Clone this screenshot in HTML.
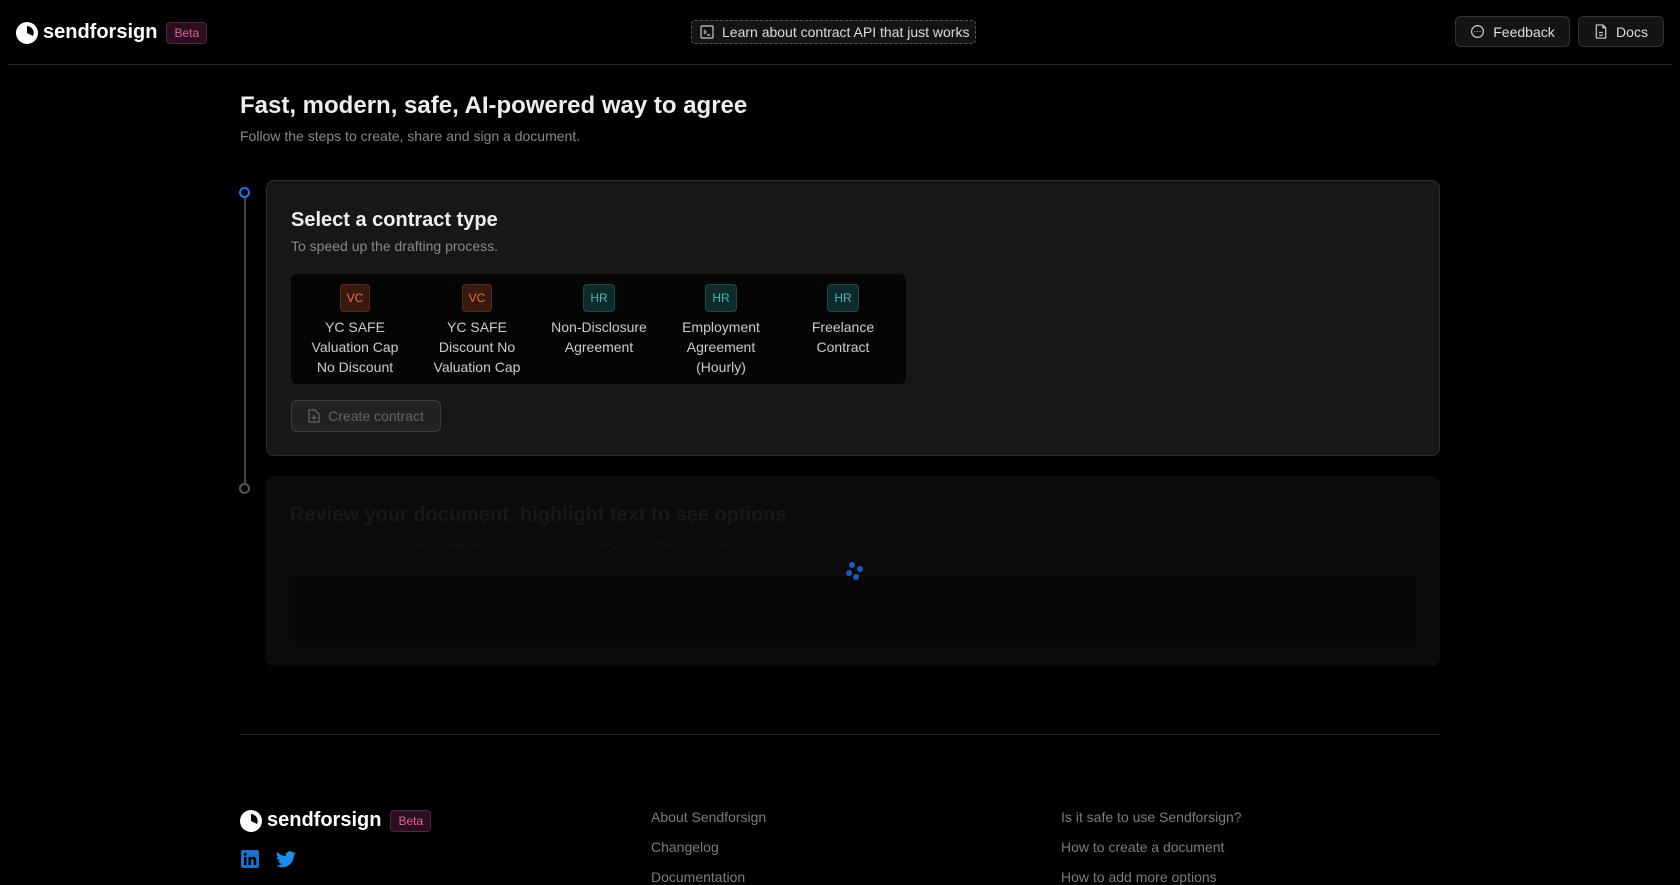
<!DOCTYPE html>
<html><head><meta charset="utf-8">
<style>
*{box-sizing:border-box;margin:0;padding:0}
body{width:1680px;height:876px;overflow:hidden;background:#000;font-family:"Liberation Sans",sans-serif;color:#e5e5e5;position:relative}
.abs{position:absolute}
.logo{display:flex;align-items:center;gap:5px;font-weight:bold;font-size:20px;color:#fff}
.beta{font-size:12px;color:#e0609a;background:#2a0f1e;border:1px solid #5a2040;border-radius:4px;padding:3px 7px;font-weight:normal;margin-left:4px}
.btn{border:1px solid #333;background:#141414;border-radius:6px;display:flex;align-items:center;justify-content:center;gap:8px;font-size:14px;color:#ddd}
.card{position:absolute;left:266px;width:1174px;border-radius:8px}
.badge{display:inline-block;font-size:12px;padding:3px 6px;border-radius:4px;margin-bottom:5px}
.vc{background:#3a1a10;border:1px solid #5a2a18;color:#e0704a}
.hr{background:#0f2a2a;border:1px solid #1e4a48;color:#4ab8b0}
.col{width:122px;text-align:center;font-size:14px;line-height:20px;color:#ccc}
.fl{position:absolute;font-size:14px;color:#7c7c7c}
</style></head><body>
<div class="abs logo" style="left:16px;top:21px">
<svg width="22" height="22" viewBox="0 0 22 22"><circle cx="11" cy="11" r="11" fill="#fff"/><path d="M11 11 L11 4 A7 7 0 0 1 17 14 Z" fill="#000"/></svg>
<span>sendforsign</span><span class="beta">Beta</span></div>
<div class="abs" style="left:691px;top:20px;width:285px;height:24px;border:1px dashed #555;border-radius:4px;background:#141414;font-size:14px;color:#ddd;display:flex;align-items:center;gap:8px;padding-left:8px">
<svg width="14" height="14" viewBox="0 0 14 14" fill="none" stroke="#ccc" stroke-width="1.2"><rect x="1" y="1" width="12" height="12" rx="1"/><path d="M4 5l2 2-2 2M7 10h3"/></svg>Learn about contract API that just works</div>
<div class="abs btn" style="left:1455px;top:16px;width:115px;height:31px"><svg width="15" height="15" viewBox="0 0 16 16" fill="none" stroke="#ccc" stroke-width="1.3"><circle cx="8" cy="8" r="6.3"/><circle cx="5.3" cy="8" r=".6" fill="#ccc" stroke="none"/><circle cx="8" cy="8" r=".6" fill="#ccc" stroke="none"/><circle cx="10.7" cy="8" r=".6" fill="#ccc" stroke="none"/></svg>Feedback</div>
<div class="abs btn" style="left:1578px;top:16px;width:86px;height:31px"><svg width="14" height="15" viewBox="0 0 14 16" fill="none" stroke="#ccc" stroke-width="1.3"><path d="M2 1h7l3 3v11H2z M9 1v3h3 M5 9h4 M5 12h4"/></svg>Docs</div>
<div class="abs" style="left:8px;top:64px;width:1664px;height:1px;background:#262626"></div>

<div class="abs" style="left:240px;top:92px;font-size:24px;font-weight:bold;color:#eee">Fast, modern, safe, AI-powered way to agree</div>
<div class="abs" style="left:240px;top:128px;font-size:14px;color:#888">Follow the steps to create, share and sign a document.</div>

<div class="abs" style="left:244px;top:192px;width:2px;height:296px;background:#444"></div>
<div class="abs" style="left:239px;top:187px;width:11px;height:11px;border-radius:50%;border:2.5px solid #2b6fe0;background:#000"></div>
<div class="abs" style="left:239px;top:483px;width:11px;height:11px;border-radius:50%;border:2.5px solid #555;background:#000"></div>

<div class="card" style="top:180px;height:276px;background:#171717;border:1px solid #2c2c2c">
<div class="abs" style="left:24px;top:28px;font-size:20px;font-weight:bold;color:#eee">Select a contract type</div>
<div class="abs" style="left:24px;top:57px;font-size:14px;color:#888">To speed up the drafting process.</div>
<div class="abs" style="left:24px;top:93px;width:615px;height:110px;background:#050505;border-radius:6px;display:flex;padding:10px 0 0 3px">
<div class="col"><span class="badge vc">VC</span><br>YC SAFE<br>Valuation Cap<br>No Discount</div>
<div class="col"><span class="badge vc">VC</span><br>YC SAFE<br>Discount No<br>Valuation Cap</div>
<div class="col"><span class="badge hr">HR</span><br>Non-Disclosure<br>Agreement</div>
<div class="col"><span class="badge hr">HR</span><br>Employment<br>Agreement<br>(Hourly)</div>
<div class="col"><span class="badge hr">HR</span><br>Freelance<br>Contract</div>
</div>
<div class="abs btn" style="left:24px;top:219px;width:150px;height:32px;background:#222;border-color:#3a3a3a;color:#666"><svg width="12" height="14" viewBox="0 0 12 14" fill="none" stroke="#666" stroke-width="1.2"><path d="M1 1h6l4 4v8H1z M6 6v5 M3.5 8.5h5"/></svg>Create contract</div>
</div>

<div class="card" style="top:476px;height:190px;background:#0b0b0b">
<div class="abs" style="left:24px;top:28px;font-size:20px;font-weight:bold;color:#191919">Review your document, highlight text to see options</div>
<div class="abs" style="left:24px;top:60px;font-size:14px;color:#121212">Any changes you make here will be saved and reflected in the document.</div>
<div class="abs" style="left:24px;top:100px;width:1126px;height:66px;background:#080808;border-radius:4px"></div>
<svg class="abs" style="left:578px;top:84px" width="22" height="22" viewBox="0 0 22 22"><g fill="#1f5ac0"><circle cx="8" cy="5" r="3"/><circle cx="16" cy="9" r="3"/><circle cx="5" cy="13" r="3"/><circle cx="12" cy="17" r="3"/></g></svg>
</div>

<div class="abs" style="left:240px;top:734px;width:1200px;height:1px;background:#262626"></div>
<div class="abs logo" style="left:240px;top:809px">
<svg width="22" height="22" viewBox="0 0 22 22"><circle cx="11" cy="11" r="11" fill="#fff"/><path d="M11 11 L11 4 A7 7 0 0 1 17 14 Z" fill="#000"/></svg>
<span>sendforsign</span><span class="beta">Beta</span></div>
<svg class="abs" style="left:241px;top:850px" width="18" height="18" viewBox="0 0 18 18"><rect width="18" height="18" rx="2" fill="#1d6fc7"/><rect x="3" y="7" width="2.5" height="8" fill="#000"/><circle cx="4.2" cy="4.2" r="1.5" fill="#000"/><path d="M7.5 7h2.4v1.2c.5-.9 1.5-1.4 2.6-1.4 2 0 2.7 1.2 2.7 3.3V15h-2.5v-4.3c0-1-.3-1.7-1.2-1.7s-1.5.7-1.5 1.7V15H7.5z" fill="#000"/></svg>
<svg class="abs" style="left:276px;top:851px" width="20" height="17" viewBox="0 0 24 20"><path d="M24 2.4a9.8 9.8 0 0 1-2.8.8A4.9 4.9 0 0 0 23.3.5a9.9 9.9 0 0 1-3.1 1.2A4.9 4.9 0 0 0 11.8 6 14 14 0 0 1 1.7.9a4.9 4.9 0 0 0 1.5 6.6A4.9 4.9 0 0 1 1 6.9a4.9 4.9 0 0 0 3.9 4.8 4.9 4.9 0 0 1-2.2.1 4.9 4.9 0 0 0 4.6 3.4A9.9 9.9 0 0 1 0 17.2 14 14 0 0 0 7.5 19.4c9 0 14-7.5 14-14v-.6A10 10 0 0 0 24 2.4z" fill="#1d8ce8"/></svg>
<div class="fl" style="left:651px;top:809px">About Sendforsign</div>
<div class="fl" style="left:651px;top:839px">Changelog</div>
<div class="fl" style="left:651px;top:869px">Documentation</div>
<div class="fl" style="left:1061px;top:809px">Is it safe to use Sendforsign?</div>
<div class="fl" style="left:1061px;top:839px">How to create a document</div>
<div class="fl" style="left:1061px;top:869px">How to add more options</div>
</body></html>
